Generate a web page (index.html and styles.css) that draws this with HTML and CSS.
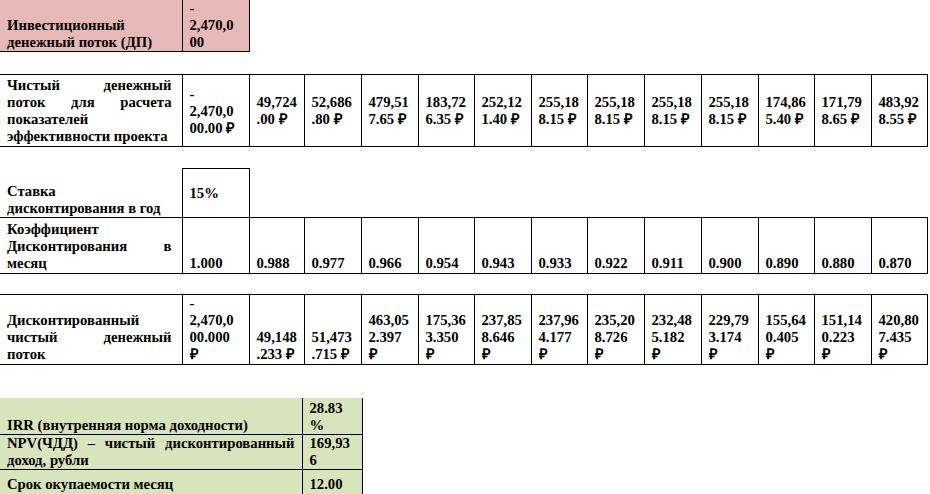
FILE: index.html
```html
<!DOCTYPE html>
<html lang="ru">
<head>
<meta charset="utf-8">
<title>Показатели эффективности проекта</title>
<link rel="stylesheet" href="styles.css">
</head>
<body>
<div class="sheet">

  <table class="grid invest">
    <colgroup><col class="c-label"><col class="c-first"></colgroup>
    <tr>
      <td class="label pink">Инвестиционный денежный поток (ДП)</td>
      <td class="num pink">-<br>2,470,0<br>00</td>
    </tr>
  </table>

  <table class="grid full flow">
    <colgroup>
      <col class="c-label"><col class="c-first"><col class="c-narrow">
      <col class="c-m"><col class="c-m"><col class="c-s"><col class="c-m"><col class="c-s">
      <col class="c-m"><col class="c-m"><col class="c-m"><col class="c-s"><col class="c-m"><col class="c-s">
    </colgroup>
    <tr class="mid">
      <td class="label just">Чистый денежный поток для расчета показателей эффективности проекта</td>
      <td class="num">-<br>2,470,0<br>00.00 ₽</td>
      <td class="num">49,724<br>.00 ₽</td>
      <td class="num">52,686<br>.80 ₽</td>
      <td class="num">479,51<br>7.65 ₽</td>
      <td class="num">183,72<br>6.35 ₽</td>
      <td class="num">252,12<br>1.40 ₽</td>
      <td class="num">255,18<br>8.15 ₽</td>
      <td class="num">255,18<br>8.15 ₽</td>
      <td class="num">255,18<br>8.15 ₽</td>
      <td class="num">255,18<br>8.15 ₽</td>
      <td class="num">174,86<br>5.40 ₽</td>
      <td class="num">171,79<br>8.65 ₽</td>
      <td class="num">483,92<br>8.55 ₽</td>
    </tr>
  </table>

  <table class="grid full rate">
    <colgroup>
      <col class="c-label"><col class="c-first"><col class="c-narrow">
      <col class="c-m"><col class="c-m"><col class="c-s"><col class="c-m"><col class="c-s">
      <col class="c-m"><col class="c-m"><col class="c-m"><col class="c-s"><col class="c-m"><col class="c-s">
    </colgroup>
    <tr class="rate-row">
      <td class="label open">Ставка<br>дисконтирования в год</td>
      <td class="num boxed midv">15%</td>
      <td class="blank" colspan="12"></td>
    </tr>
    <tr class="coef-row">
      <td class="label just">Коэффициент Дисконтирования в месяц</td>
      <td class="num">1.000</td>
      <td class="num">0.988</td>
      <td class="num">0.977</td>
      <td class="num">0.966</td>
      <td class="num">0.954</td>
      <td class="num">0.943</td>
      <td class="num">0.933</td>
      <td class="num">0.922</td>
      <td class="num">0.911</td>
      <td class="num">0.900</td>
      <td class="num">0.890</td>
      <td class="num">0.880</td>
      <td class="num">0.870</td>
    </tr>
  </table>

  <table class="grid full disc">
    <colgroup>
      <col class="c-label"><col class="c-first"><col class="c-narrow">
      <col class="c-m"><col class="c-m"><col class="c-s"><col class="c-m"><col class="c-s">
      <col class="c-m"><col class="c-m"><col class="c-m"><col class="c-s"><col class="c-m"><col class="c-s">
    </colgroup>
    <tr>
      <td class="label"><span class="line">Дисконтированный</span><span class="line spread">чистый денежный</span><span class="line">поток</span></td>
      <td class="num">-<br>2,470,0<br>00.000<br>₽</td>
      <td class="num">49,148<br>.233 ₽</td>
      <td class="num">51,473<br>.715 ₽</td>
      <td class="num">463,05<br>2.397<br>₽</td>
      <td class="num">175,36<br>3.350<br>₽</td>
      <td class="num">237,85<br>8.646<br>₽</td>
      <td class="num">237,96<br>4.177<br>₽</td>
      <td class="num">235,20<br>8.726<br>₽</td>
      <td class="num">232,48<br>5.182<br>₽</td>
      <td class="num">229,79<br>3.174<br>₽</td>
      <td class="num">155,64<br>0.405<br>₽</td>
      <td class="num">151,14<br>0.223<br>₽</td>
      <td class="num">420,80<br>7.435<br>₽</td>
    </tr>
  </table>

  <table class="grid summary">
    <colgroup><col class="c-sum-label"><col class="c-sum-val"></colgroup>
    <tr class="s1">
      <td class="label green">IRR (внутренняя норма доходности)</td>
      <td class="num green">28.83<br>%</td>
    </tr>
    <tr class="s2">
      <td class="label green just">NPV(ЧДД) – чистый дисконтированный доход, рубли</td>
      <td class="num green">169,93<br>6</td>
    </tr>
    <tr class="s3">
      <td class="label green">Срок окупаемости месяц</td>
      <td class="num green">12.00</td>
    </tr>
  </table>

</div>
</body>
</html>
```

FILE: styles.css
```css
html, body {
  margin: 0;
  padding: 0;
  background: #ffffff;
}

body {
  font-family: "Liberation Serif", "Times New Roman", serif;
  font-weight: bold;
  font-size: 14.7px;
  line-height: 17px;
  color: #000;
}

.sheet {
  width: 930px;
  display: flex;
  flex-direction: column;
  align-items: flex-start;
}

.grid {
  border-collapse: collapse;
  table-layout: fixed;
}

.grid td {
  padding: 0 7px;
  vertical-align: bottom;
  border: 1px solid #000;
  overflow: hidden;
}

.grid td:first-child {
  border-left: none;
}

/* column widths */
.c-label { width: 182px; }
.c-first { width: 67px; }
.c-narrow { width: 55px; }
.c-m { width: 57px; }
.c-s { width: 56px; }
.c-sum-label { width: 302px; }
.c-sum-val { width: 60px; }

.full { width: 927px; }

/* block 1 – investment */
.invest {
  width: 249px;
}
.invest td {
  border-top: none;
  height: 51px;
}
.pink { background: #e6b8b7; }

.label { text-align: left; }
.just {
  text-align: justify;
  text-align-last: left;
}
.full td.label { padding-right: 10px; }
.num { text-align: left; white-space: nowrap; }

.line { display: block; }
.spread {
  text-align: justify;
  text-align-last: justify;
}

/* block 2 – net cash flow */
.flow {
  margin-top: 22px;
}
.flow td {
  height: 68px;
  padding-top: 2px;
  padding-bottom: 1px;
  vertical-align: middle;
}
.flow td.label { vertical-align: bottom; }

/* block 3 – discount rate / coefficient */
.rate {
  margin-top: 21px;
}
.rate-row td { height: 48px; }
.rate-row td.open {
  border-top: none;
}
.rate-row td.blank {
  border: none;
  border-bottom: 1px solid #000;
}
.rate-row td.midv { vertical-align: middle; }
.coef-row td {
  height: 54px;
  padding-bottom: 1px;
}

/* block 4 – discounted flow */
.disc {
  margin-top: 20px;
}
.disc td {
  height: 68px;
  padding-bottom: 1px;
}

/* block 5 – summary */
.summary {
  margin-top: 33px;
  width: 362px;
}
.summary td {
  border-top: none;
}
.green { background: #d8e4bc; }
.s1 td { height: 36px; }
.s2 td { height: 34px; }
.s3 td { height: 23px; padding-bottom: 1px; }
```
